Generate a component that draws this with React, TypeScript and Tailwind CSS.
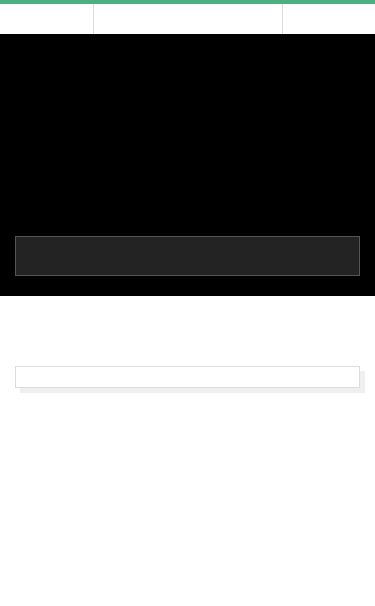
import React from 'react';

const App: React.FC = () => {
  return (
    <div className="min-h-screen bg-white font-['Liberation_Sans',sans-serif]">
      {/* Top accent */}
      <div className="h-1 bg-[#4caf7e]" />

      {/* Tabs row */}
      <div className="flex h-[30px] bg-white">
        <div className="w-[94px] border-r border-[#dddddd]" />
        <div className="flex-1 border-r border-[#dddddd]" />
        <div className="w-[92px]" />
      </div>

      {/* Player area */}
      <div className="flex h-[262px] flex-col justify-end bg-black px-[15px] pb-5">
        <div className="h-10 border border-[#555555] bg-[#232323]" />
      </div>

      {/* Content */}
      <div className="px-[15px] pt-[70px]">
        <div className="h-[22px] border border-[#dddddd] bg-white shadow-[5px_5px_0_#efefef]" />
      </div>
    </div>
  );
};

export default App;
